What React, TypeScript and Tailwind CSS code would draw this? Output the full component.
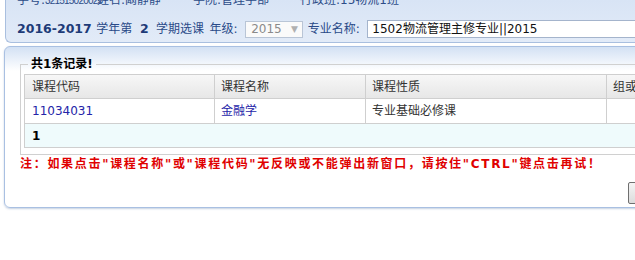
import React from "react";

const F = "font-['DejaVu_Sans','Noto_Sans_CJK_SC',sans-serif]";

export default function App() {
  return (
    <div className={`w-[635px] h-[260px] overflow-hidden bg-white ${F}`}>
      {/* top info panel */}
      <div className="ml-[5px] h-[43px] w-[660px] rounded-bl-[6px] border-l border-b border-[#a9bfdf] bg-[linear-gradient(#d8e4f5,#e2ebf8)] pl-[11px] overflow-hidden">
        <div className="mt-[-7px] h-[14px] flex text-[12px] leading-[14px] text-[#2c4c88] whitespace-nowrap">
          <span className="w-[80px]">
            学号:<span className="font-['Liberation_Sans_Narrow','Liberation_Sans',sans-serif] text-[10px] tracking-[-0.8px]">321515020025</span>
          </span>
          <span className="w-[96px]">姓名:阚静静</span>
          <span className="w-[107px]">学院:管理学部</span>
          <span>行政班:15物流1班</span>
        </div>
        <div className="mt-[13px] h-[18px] flex items-center whitespace-nowrap text-[#2a4a88]">
          <span className="w-[80px] text-[12.5px] font-bold text-[#1d3b78]">2016-2017</span>
          <span className="w-[44px] text-[12px]">学年第</span>
          <span className="w-[16px] text-[12.5px] font-bold text-[#1d3b78]">2</span>
          <span className="w-[54px] text-[12px]">学期选课</span>
          <span className="w-[36px] text-[12px]">年级:</span>
          <div className="w-[58px] h-[17px] border border-[#b9c5d6] bg-[#fafafa] flex items-center justify-between pl-[5px] pr-[4px]">
            <span className="text-[12px] text-[#8a8a8a] leading-none">2015</span>
            <span className="text-[9px] text-[#b0b0b0] leading-none">▼</span>
          </div>
          <span className="ml-[5px] w-[60px] text-[12px]">专业名称:</span>
          <div className="w-[300px] h-[18px] border border-[#a4b4cc] bg-white flex items-center pl-[4px]">
            <span className="text-[12px] text-[#111] leading-none">1502物流管理主修专业||2015</span>
          </div>
        </div>
      </div>

      {/* main panel */}
      <div className="mt-[3px] ml-[4px] w-[680px] h-[162px] rounded-[6px] border border-[#a9c0e2] bg-[linear-gradient(#d3e1f4,#ffffff_24px)] shadow-[0_1px_2px_rgba(90,120,170,0.35)] overflow-hidden">
        <fieldset className="mt-[10px] ml-[15px] w-[700px] border border-[#d0d0d0] px-[3px] pb-[6px]">
          <legend className="ml-[4px] px-[3px] text-[12px] leading-[14px] font-bold text-black">共1条记录!</legend>
          <table className="mt-[3px] w-[690px] border-collapse text-[12px] table-fixed">
            <colgroup>
              <col className="w-[190px]" />
              <col className="w-[151px]" />
              <col className="w-[241px]" />
              <col className="w-[108px]" />
            </colgroup>
            <thead>
              <tr className="h-[24px] bg-[linear-gradient(#f7f7f7,#e6e6e6)]">
                <th className="border border-[#cfcfcf] text-left font-normal pl-[7px] text-[#333]">课程代码</th>
                <th className="border border-[#cfcfcf] text-left font-normal pl-[6px] text-[#333]">课程名称</th>
                <th className="border border-[#cfcfcf] text-left font-normal pl-[6px] text-[#333]">课程性质</th>
                <th className="border border-[#cfcfcf] text-left font-normal pl-[6px] text-[#333]">组或模块</th>
              </tr>
            </thead>
            <tbody>
              <tr className="h-[25px] bg-white">
                <td className="border border-[#cfcfcf] pl-[7px] text-[#2424a8]">11034031</td>
                <td className="border border-[#cfcfcf] pl-[6px] text-[#2424a8]">金融学</td>
                <td className="border border-[#cfcfcf] pl-[6px] text-[#333]">专业基础必修课</td>
                <td className="border border-[#cfcfcf] pl-[6px]"></td>
              </tr>
              <tr className="h-[24px] bg-[#effbfc]">
                <td colSpan={4} className="border border-[#cfcfcf] pl-[7px] font-bold text-black">1</td>
              </tr>
            </tbody>
          </table>
        </fieldset>
        <div className="mt-[2px] ml-[15px] text-[12px] leading-[14px] font-bold tracking-[1.7px] text-[#e00000] whitespace-nowrap">
          注：如果点击"课程名称"或"课程代码"无反映或不能弹出新窗口，请按住"CTRL"键点击再试！
        </div>
        <div className="mt-[11px] ml-[623px] w-[60px] h-[22px] border border-[#6f6f6f] rounded-[2px] bg-[linear-gradient(#f4f4f4,#dcdcdc)]"></div>
      </div>
    </div>
  );
}
